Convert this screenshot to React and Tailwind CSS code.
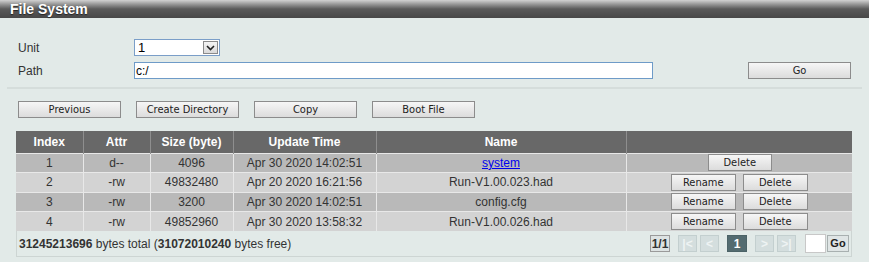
import React from 'react';

const rows = [
  { index: 1, attr: 'd--', size: '4096', time: 'Apr 30 2020 14:02:51', name: 'system', dir: true },
  { index: 2, attr: '-rw', size: '49832480', time: 'Apr 20 2020 16:21:56', name: 'Run-V1.00.023.had' },
  { index: 3, attr: '-rw', size: '3200', time: 'Apr 30 2020 14:02:51', name: 'config.cfg' },
  { index: 4, attr: '-rw', size: '49852960', time: 'Apr 30 2020 13:58:32', name: 'Run-V1.00.026.had' },
];

const Btn = ({ children, className = '' }) => (
  <button
    className={`h-[17px] border border-[#8c8c8c] bg-gradient-to-b from-[#f6f6f6] to-[#dcdcdc] text-[11px] leading-none text-[#222] font-['DejaVu_Sans_Condensed','DejaVu_Sans',sans-serif] ${className}`}
  >
    {children}
  </button>
);

const PageBtn = ({ children, active, disabled, className = '' }) => (
  <span
    className={`flex h-[17px] w-[19px] items-center justify-center border text-[12px] font-bold ${
      active
        ? 'border-[#4c6367] bg-[#536b70] text-white'
        : disabled
        ? 'border-[#c3cfcf] bg-[#d4dede] text-[#eef3f3]'
        : 'border-[#9a9a9a] bg-[#dde3e3] text-[#333]'
    } ${className}`}
  >
    {children}
  </span>
);

export default function App() {
  return (
    <div className="h-[262px] w-[869px] bg-[#e2eae8] font-['Liberation_Sans',Arial,sans-serif] text-[12px] text-[#333]">
      {/* Title bar */}
      <div className="flex h-[18px] items-center bg-gradient-to-b from-[#d2d2d2] via-[#5a5a5a] to-[#484848] pl-[10px]">
        <span className="text-[14px] font-bold text-white [text-shadow:0_1px_1px_#222]">File System</span>
      </div>

      {/* Unit / Path */}
      <div className="flex flex-col gap-[6px] pl-[18px] pt-[21px]">
        <div className="flex h-[17px] items-center">
          <span className="w-[116px]">Unit</span>
          <div className="flex h-[17px] w-[86px] items-center justify-between border border-[#7a9ec8] bg-white pl-[3px] pr-[1px]">
            <span className="text-[13px] text-black">1</span>
            <span className="flex h-[13px] w-[15px] items-center justify-center border border-[#8a8a8a] bg-gradient-to-b from-[#f4f4f4] to-[#dadada]">
              <svg width="9" height="6" viewBox="0 0 9 6">
                <path d="M1 1 L4.5 4.5 L8 1" stroke="#222" strokeWidth="1.6" fill="none" />
              </svg>
            </span>
          </div>
        </div>
        <div className="flex h-[17px] items-center">
          <span className="w-[116px]">Path</span>
          <div className="flex h-[17px] w-[519px] items-center border border-[#6e9bc8] bg-white pl-[1px] text-black">c:/</div>
          <Btn className="ml-[95px] w-[103px]">Go</Btn>
        </div>
      </div>

      {/* divider */}
      <div className="mx-[7px] mt-[8px] h-[2px] bg-[#d5dddb]" />

      {/* Action buttons */}
      <div className="mt-[12px] flex gap-[15px] pl-[18px]">
        <Btn className="w-[103px]">Previous</Btn>
        <Btn className="w-[103px]">Create Directory</Btn>
        <Btn className="w-[103px]">Copy</Btn>
        <Btn className="w-[103px]">Boot File</Btn>
      </div>

      {/* Table */}
      <div className="ml-[16px] mt-[13px] w-[836px]">
        <table className="w-full table-fixed border-collapse text-center">
          <colgroup>
            <col className="w-[67px]" />
            <col className="w-[67px]" />
            <col className="w-[83px]" />
            <col className="w-[143px]" />
            <col className="w-[250px]" />
            <col />
          </colgroup>
          <thead>
            <tr className="h-[22px] bg-[#686868] font-bold text-white">
              <th className="border-r border-[#8e8e8e]">Index</th>
              <th className="border-r border-[#8e8e8e]">Attr</th>
              <th className="border-r border-[#8e8e8e]">Size (byte)</th>
              <th className="border-r border-[#8e8e8e]">Update Time</th>
              <th className="border-r border-[#8e8e8e]">Name</th>
              <th></th>
            </tr>
          </thead>
          <tbody>
            {rows.map((r, i) => (
              <tr
                key={r.index}
                className={`h-[19.5px] border-t border-[#e8e8e8] ${i % 2 === 0 ? 'bg-[#b9b9b9]' : 'bg-[#d3d3d3]'}`}
              >
                <td className="border-r border-[#e8e8e8]">{r.index}</td>
                <td className="border-r border-[#e8e8e8]">{r.attr}</td>
                <td className="border-r border-[#e8e8e8]">{r.size}</td>
                <td className="border-r border-[#e8e8e8]">{r.time}</td>
                <td className="border-r border-[#e8e8e8]">
                  {r.dir ? <span className="text-[#0000ee] underline">{r.name}</span> : r.name}
                </td>
                <td>
                  <div className="flex justify-center gap-[7px]">
                    {r.dir ? (
                      <Btn className="ml-[1px] w-[64px]">Delete</Btn>
                    ) : (
                      <>
                        <Btn className="w-[65px]">Rename</Btn>
                        <Btn className="w-[65px]">Delete</Btn>
                      </>
                    )}
                  </div>
                </td>
              </tr>
            ))}
          </tbody>
        </table>

        {/* Footer */}
        <div className="flex h-[26px] items-center justify-between border border-t-0 border-[#cdd5d3] pl-[2px] pr-[2px]">
          <span>
            <b>31245213696</b> bytes total (<b>31072010240</b> bytes free)
          </span>
          <div className="flex items-center">
            <PageBtn className="w-[20px] border-[#8a8a8a] bg-[#d6dcdc]">1/1</PageBtn>
            <PageBtn disabled className="ml-[8px]">|&lt;</PageBtn>
            <PageBtn disabled className="ml-[3px]">&lt;</PageBtn>
            <PageBtn active className="ml-[8px] w-[20px]">1</PageBtn>
            <PageBtn disabled className="ml-[8px]">&gt;</PageBtn>
            <PageBtn disabled className="ml-[3px]">&gt;|</PageBtn>
            <span className="ml-[9px] h-[19px] w-[21px] border border-[#c8c8c8] bg-white" />
            <span className="ml-[1px] flex h-[17px] w-[22px] items-center justify-center border border-[#a8b0b0] bg-[#dfe5e5] text-[11px] font-bold text-[#222]">
              Go
            </span>
          </div>
        </div>
      </div>
    </div>
  );
}
